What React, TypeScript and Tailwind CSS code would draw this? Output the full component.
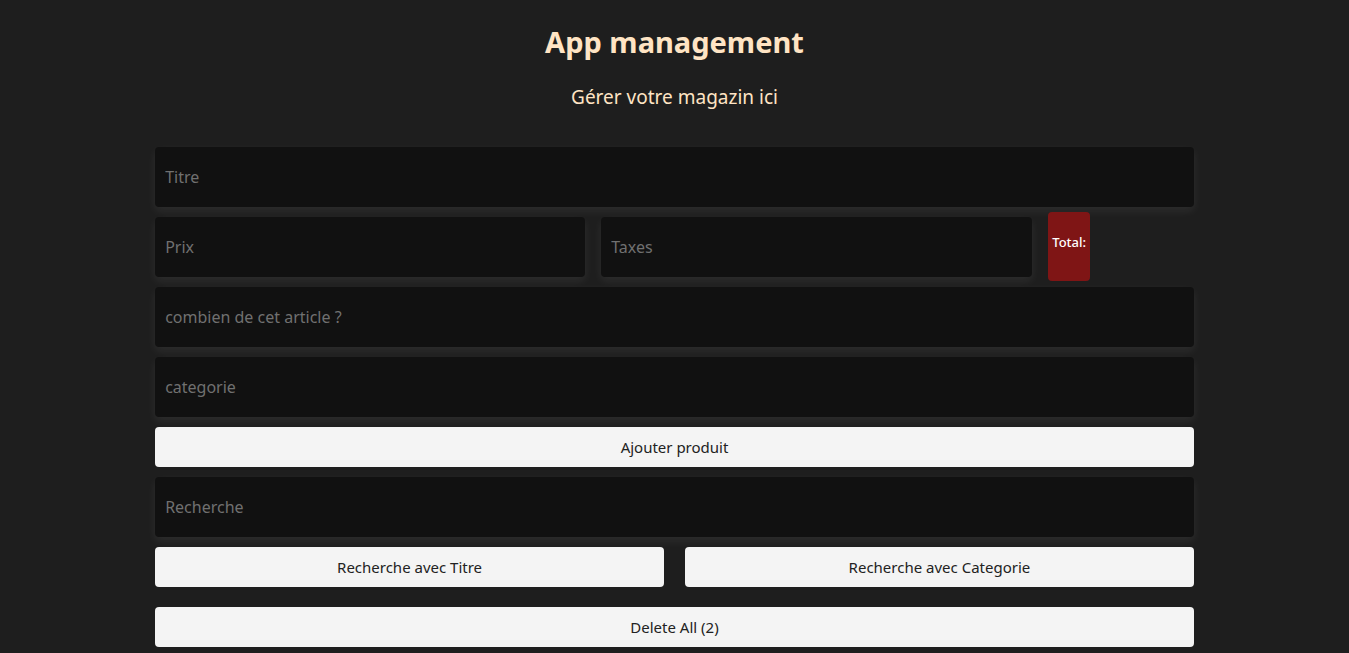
export default function App() {
  const field =
    "h-[60px] w-full rounded-[4px] bg-[#111111] px-[10px] text-[16px] text-[#e5e5e5] outline-none placeholder:text-[#707070] shadow-[0_4px_10px_rgba(255,255,255,0.07)]";
  const btn =
    "h-[40px] w-full rounded-[4px] bg-[#f4f4f4] text-[15px] text-[#222222]";

  return (
    <div
      className="min-h-screen bg-[#1e1e1e] text-[#ffe4c4]"
      style={{ fontFamily: '"Noto Sans", "Open Sans", sans-serif' }}
    >
      <header className="pt-[20px] text-center">
        <h1 className="text-[29px] font-bold leading-[44px] text-[#ffe4c4]">App management</h1>
        <p className="mt-[20px] text-[19px] leading-[26px] text-[#ffe4c4]">Gérer votre magazin ici</p>
      </header>

      <main className="mx-auto mt-[37px] flex w-[77%] flex-col">
        <input className={field} placeholder="Titre" />

        <div className="mt-[5px] flex items-center gap-[16px]">
          <input className={`${field} !w-[430px]`} placeholder="Prix" />
          <input className={`${field} !w-[431px]`} placeholder="Taxes" />
          <div className="flex h-[69px] w-[42px] items-center justify-center rounded-[4px] bg-[#7f1515] pb-[8px] text-[13px] font-medium text-white">
            Total:
          </div>
        </div>

        <input className={`${field} mt-[6px]`} placeholder="combien de cet article ?" />
        <input className={`${field} mt-[10px]`} placeholder="categorie" />

        <button className={`${btn} mt-[10px]`}>Ajouter produit</button>

        <input className={`${field} mt-[10px]`} placeholder="Recherche" />

        <div className="mt-[10px] flex gap-[21px]">
          <button className={btn}>Recherche avec Titre</button>
          <button className={btn}>Recherche avec Categorie</button>
        </div>

        <button className={`${btn} mt-[20px]`}>Delete All (2)</button>
      </main>
    </div>
  );
}
